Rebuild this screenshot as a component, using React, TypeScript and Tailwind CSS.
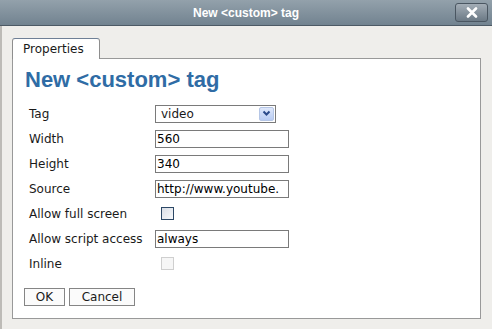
import React from 'react';

function Row({ label, children }: { label: string; children: React.ReactNode }) {
  return (
    <div className="flex items-center h-[25px]">
      <div className="w-[126px] shrink-0">{label}</div>
      {children}
    </div>
  );
}

function TextBox({ value }: { value: string }) {
  return (
    <div className="w-[134px] h-[18px] border border-[#7a7a7a] bg-white pl-[1px] leading-[16px] overflow-hidden whitespace-nowrap text-black">
      {value}
    </div>
  );
}

export default function App() {
  return (
    <div className="w-[492px] h-[329px] flex flex-col bg-[#efeeeb] font-['DejaVu_Sans',sans-serif] text-[12px] text-[#1a1a1a] overflow-hidden">
      {/* title bar */}
      <div className="relative h-[26px] shrink-0 flex items-center justify-center bg-gradient-to-b from-[#93a1ab] to-[#728390] border-b border-[#4d5a65]">
        <span className="font-['Liberation_Sans',sans-serif] font-bold text-[12px] text-white">
          New &lt;custom&gt; tag
        </span>
        <div className="absolute right-[4px] top-[3px] w-[33px] h-[19px] rounded-[3px] border border-[#4a5661] bg-gradient-to-b from-[#a3adb6] to-[#6b7985] flex items-center justify-center">
          <svg width="12" height="11" viewBox="0 0 12 11">
            <path d="M2 1.5 L10 9.5 M10 1.5 L2 9.5" stroke="white" strokeWidth="2.6" strokeLinecap="round" />
          </svg>
        </div>
      </div>

      {/* body */}
      <div className="flex-1 flex flex-col pt-[11px] pb-[10px] pl-[12px] pr-[11px] border-l-2 border-[#bdbbb7]">
        <div className="flex">
          <div className="h-[21px] w-[88px] ml-[-2px] border border-b-0 border-[#8e8e8e] border-t-[#6f8096] rounded-t-[3px] bg-white flex items-center pl-[10px] relative top-[1px]">
            Properties
          </div>
        </div>
        <div className="flex-1 ml-[-2px] border border-[#999999] bg-white pt-[8px] pl-[12px]">
          <h1 className="font-['Liberation_Sans',sans-serif] font-bold text-[22px] leading-[26px] text-[#2f6ca5]">
            New &lt;custom&gt; tag
          </h1>
          <div className="mt-[8px] pl-[4px] flex flex-col">
            <Row label="Tag">
              <div className="w-[121px] h-[18px] border border-[#7a7a7a] bg-white flex items-center justify-between pl-[5px] pr-[1px]">
                <span>video</span>
                <div className="w-[15px] h-[14px] rounded-[2px] border border-[#b5c6e6] bg-gradient-to-b from-[#dfe8fb] to-[#b9ccf3] flex items-center justify-center">
                  <svg width="9" height="7" viewBox="0 0 9 7">
                    <path d="M1.5 1.5 L4.5 4.5 L7.5 1.5" stroke="#2b4a8a" strokeWidth="2" fill="none" />
                  </svg>
                </div>
              </div>
            </Row>
            <Row label="Width">
              <TextBox value="560" />
            </Row>
            <Row label="Height">
              <TextBox value="340" />
            </Row>
            <Row label="Source">
              <TextBox value="http://www.youtube." />
            </Row>
            <Row label="Allow full screen">
              <div className="ml-[6px] w-[13px] h-[13px] border border-[#2c4866] bg-gradient-to-br from-[#d9dee6] to-[#f7f8fa]" />
            </Row>
            <Row label="Allow script access">
              <TextBox value="always" />
            </Row>
            <Row label="Inline">
              <div className="ml-[6px] w-[13px] h-[13px] border border-[#cfcfcf] bg-[#f6f6f6]" />
            </Row>
          </div>
          <div className="mt-[12px] ml-[-1px] flex gap-[4px]">
            <button className="w-[41px] h-[18px] border border-[#858585] bg-[#fbfbfb] leading-[16px] text-center">
              OK
            </button>
            <button className="w-[66px] h-[18px] border border-[#858585] bg-[#fbfbfb] leading-[16px] text-center">
              Cancel
            </button>
          </div>
        </div>
      </div>
    </div>
  );
}
